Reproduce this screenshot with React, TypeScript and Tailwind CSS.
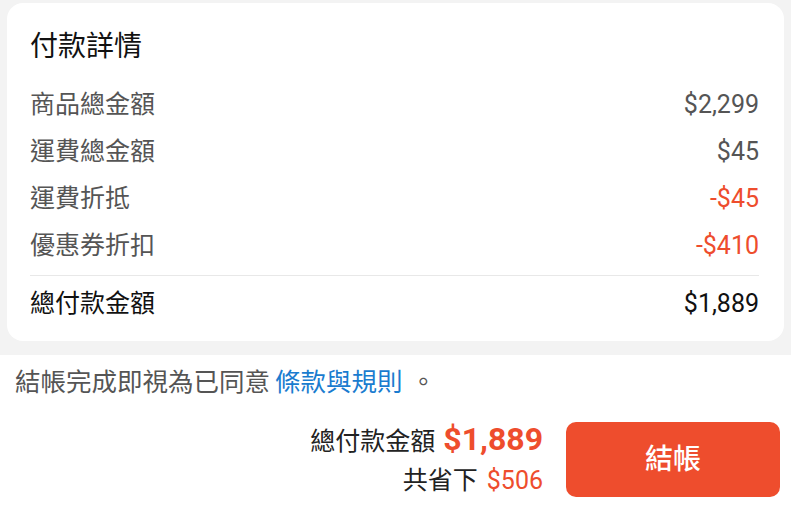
import React from 'react';

const rows = [
    { label: '商品總金額', value: '$2,299', red: false },
    { label: '運費總金額', value: '$45', red: false },
    { label: '運費折抵', value: '-$45', red: true },
    { label: '優惠券折扣', value: '-$410', red: true },
];

function App() {
    return (
        <div className="w-[791px] h-[506px] flex flex-col bg-[#f3f3f3] overflow-hidden font-['Roboto','Noto_Sans_CJK_TC',sans-serif]">
            {/* payment details card */}
            <div className="pt-[3px] px-[7px] pb-[14px]">
                <div className="bg-white rounded-[16px] pt-[24px] pb-[11px] pl-[23px] pr-[25px]">
                    <h2 className="h-[40px] flex items-center text-[28px] text-[#111] leading-none">付款詳情</h2>
                    <div className="mt-[14px]">
                        {rows.map((r) => (
                            <div key={r.label} className="h-[47px] flex items-center justify-between text-[25px] leading-none">
                                <span className="text-[#555]">{r.label}</span>
                                <span className={r.red ? 'text-[#ee4d2d]' : 'text-[#555]'}>{r.value}</span>
                            </div>
                        ))}
                    </div>
                    <div className="mt-[6px] h-px bg-[#e8e8e8]" />
                    <div className="h-[54px] flex items-center justify-between text-[25px] leading-none text-[#111]">
                        <span>總付款金額</span>
                        <span>$1,889</span>
                    </div>
                </div>
            </div>

            {/* checkout bar */}
            <div className="flex-1 bg-white flex flex-col">
                <div className="pt-[10px] pl-[15px] h-[46px] flex items-center text-[25.5px] leading-none text-[#555]">
                    <span>結帳完成即視為已同意</span>
                    <span className="ml-[5px] text-[#1a7ccf]">條款與規則</span>
                    <span className="ml-[8px]">。</span>
                </div>
                <div className="mt-[18px] flex items-center justify-end pr-[11px]">
                    <div className="flex flex-col items-end mr-[23px]">
                        <div className="flex items-baseline leading-[40px]">
                            <span className="text-[25px] text-[#222]">總付款金額</span>
                            <span className="ml-[8px] text-[32px] font-bold text-[#ee4d2d]">$1,889</span>
                        </div>
                        <div className="flex items-baseline leading-[38px]">
                            <span className="text-[25px] text-[#222]">共省下</span>
                            <span className="ml-[9px] text-[25px] text-[#ee4d2d]">$506</span>
                        </div>
                    </div>
                    <button className="w-[214px] h-[75px] rounded-[10px] bg-[#ee4d2d] text-white text-[28px] font-medium flex items-center justify-center">結帳</button>
                </div>
            </div>
        </div>
    );
}

export default App;
